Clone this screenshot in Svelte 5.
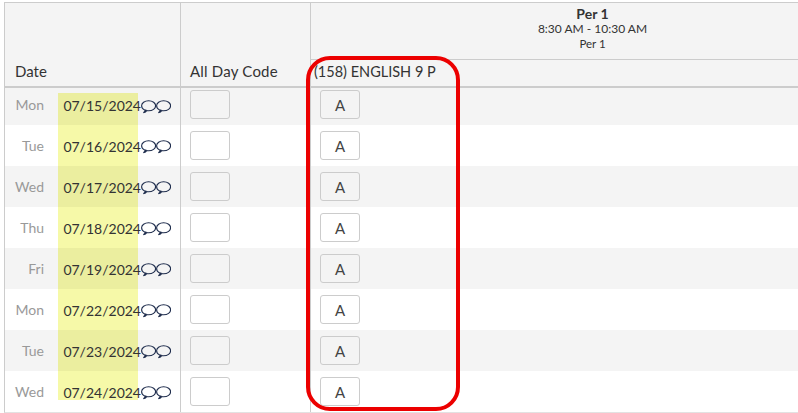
<script>
  const rows = [
    { day: 'Mon', date: '07/15/2024' },
    { day: 'Tue', date: '07/16/2024' },
    { day: 'Wed', date: '07/17/2024' },
    { day: 'Thu', date: '07/18/2024' },
    { day: 'Fri', date: '07/19/2024' },
    { day: 'Mon', date: '07/22/2024' },
    { day: 'Tue', date: '07/23/2024' },
    { day: 'Wed', date: '07/24/2024' },
  ]
</script>

{#snippet bubble()}
  <svg class="bubble" width="15" height="14" viewBox="0 0 15 14">
    <path d="M3.6 10C1.8 9.2.6 7.6.6 5.8.6 3 3.6.8 7.6.8s7 2.2 7 5-3 5-7 5c-.7 0-1.3-.1-1.9-.2-.6 1-1.7 1.7-3.3 2.1.9-.7 1.6-1.6 2.2-2.7z" />
  </svg>
{/snippet}

<div class="page">
  <div class="sheet">
    <div class="head">
      <div class="head-date"><span>Date</span></div>
      <div class="head-code"><span>All Day Code</span></div>
      <div class="head-per">
        <div class="per-info">
          <strong>Per 1</strong>
          <span class="time">8:30 AM - 10:30 AM</span>
          <span class="name">Per 1</span>
        </div>
        <div class="course">(158) ENGLISH 9 P</div>
      </div>
    </div>

    {#each rows as row, i}
      <div class="row" class:odd={i % 2 === 0} class:first={i === 0} class:last={i === rows.length - 1}>
        <div class="c-day">{row.day}</div>
        <div class="c-date">
          <span class="date"><span>{row.date}</span></span>
          <span class="icons">{@render bubble()}{@render bubble()}</span>
        </div>
        <div class="c-code"><div class="box"></div></div>
        <div class="c-per"><div class="box">A</div></div>
      </div>
    {/each}

    <div class="callout"></div>
  </div>
</div>

<style>
  :global(body) {
    margin: 0;
    background: #fff;
  }
  .page {
    width: 798px;
    height: 413px;
    overflow: hidden;
    padding: 2px 0 0 4px;
    box-sizing: border-box;
    font-family: Lato, "Noto Sans", sans-serif;
    color: #333;
  }
  .sheet {
    position: relative;
    width: 869px;
    border-top: 1px solid #ccc;
    border-left: 1px solid #ccc;
    border-bottom: 1px solid #e2e2e2;
  }
  .head {
    display: flex;
    height: 83px;
    background: #f4f4f4;
    border-bottom: 2px solid #ccc;
    font-size: 15px;
  }
  .head-date {
    width: 176px;
    border-right: 1px solid #ccc;
    display: flex;
    align-items: flex-end;
    padding: 0 0 6px 10px;
    box-sizing: border-box;
  }
  .head-code {
    width: 130px;
    border-right: 1px solid #ccc;
    display: flex;
    align-items: flex-end;
    padding: 0 0 6px 9px;
    box-sizing: border-box;
    letter-spacing: 0.2px;
  }
  .head-per {
    flex: 1;
    display: flex;
    flex-direction: column;
  }
  .per-info {
    height: 57px;
    border-bottom: 1px solid #ccc;
    display: flex;
    flex-direction: column;
    align-items: center;
    padding-top: 3px;
    box-sizing: border-box;
    font-size: 12px;
    line-height: 15px;
  }
  .per-info strong {
    font-size: 14px;
    line-height: 15px;
    font-weight: 700;
  }
  .per-info .name {
    font-size: 11.5px;
  }
  .course {
    padding: 3px 0 0 3px;
    line-height: 18px;
    font-size: 14.5px;
  }
  .row {
    display: flex;
    height: 41px;
    font-size: 14px;
  }
  .row.first {
    height: 37px;
  }
  .row.odd {
    background: #f4f4f4;
  }
  .c-day {
    width: 53px;
    padding-right: 14px;
    box-sizing: border-box;
    text-align: right;
    color: #999;
    line-height: 42px;
  }
  .first .c-day {
    line-height: 34px;
  }
  .c-date {
    width: 123px;
    display: flex;
    border-right: 1px solid #ccc;
    box-sizing: border-box;
  }
  .date {
    display: flex;
    justify-content: flex-end;
    width: 80px;
    line-height: 44px;
    white-space: nowrap;
    background: #f6f9a8;
  }
  .date span {
    margin-right: -3px;
  }
  .odd .date {
    background: #ebee9f;
  }
  .first .date {
    margin-top: 5px;
    line-height: 25px;
  }
  .last .date {
    height: 29px;
  }
  .icons {
    display: flex;
    align-items: flex-start;
    margin: 15px 0 0 3px;
  }
  .first .icons {
    margin-top: 12px;
  }
  .bubble {
    display: block;
    fill: none;
    stroke: #1f2d4d;
    stroke-width: 1.1;
  }
  .c-code {
    width: 130px;
    border-right: 1px solid #ccc;
    box-sizing: border-box;
    padding: 6px 0 0 9px;
  }
  .c-per {
    flex: 1;
    padding: 6px 0 0 9px;
  }
  .first .c-code,
  .first .c-per {
    padding-top: 2px;
  }
  .box {
    width: 40px;
    height: 29px;
    box-sizing: border-box;
    border: 1px solid #ccc;
    border-radius: 3px;
    text-align: center;
    font-size: 15px;
    line-height: 29px;
    color: #444;
  }
  .callout {
    position: absolute;
    left: 301px;
    top: 53px;
    width: 154px;
    height: 355px;
    box-sizing: border-box;
    border: 4px solid #ec0000;
    border-radius: 24px;
  }
</style>
